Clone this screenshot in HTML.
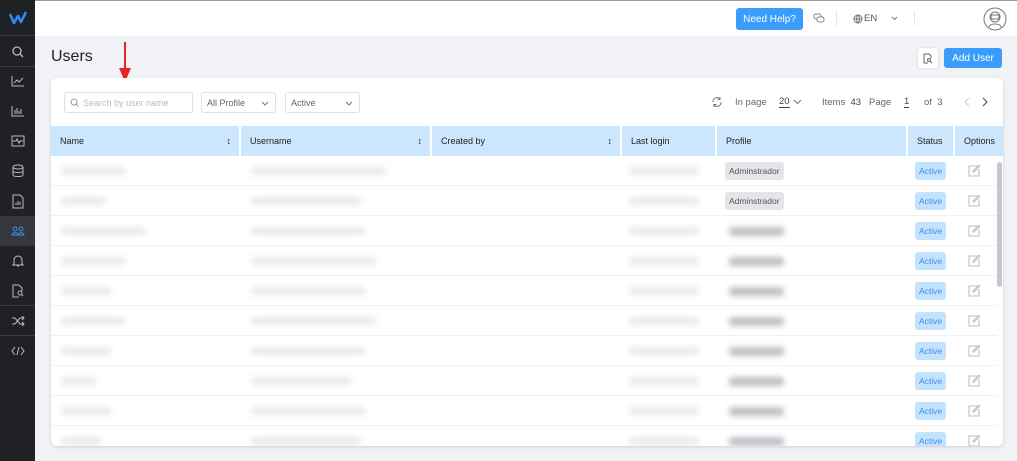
<!DOCTYPE html>
<html><head><style>
*{box-sizing:border-box;margin:0;padding:0}
body{width:1017px;height:461px;overflow:hidden;background:#f0f2f6;font-family:"Liberation Sans",sans-serif;position:relative;font-size:10px;color:#333}
.side{position:absolute;left:0;top:0;width:35px;height:461px;background:#1f2125}
.side .logo{height:36px;border-bottom:1px solid #3a3c40;display:flex;align-items:center;justify-content:center}
.ic{position:absolute;left:0;width:35px;height:30px;display:flex;align-items:center;justify-content:center}
.top{position:absolute;left:35px;top:0;right:0;height:36px;background:#fff;border-top:1px solid #999}
.btn{position:absolute;background:#3b9dfa;color:#fff;border-radius:3px;font-size:10px;display:flex;align-items:center;justify-content:center}
.card{position:absolute;left:51px;top:78px;width:952px;height:368px;background:#fff;border-radius:6px;box-shadow:0 1px 3px rgba(0,0,0,.15);overflow:hidden}
.inp{position:absolute;top:14px;height:21px;border:1px solid #dde0e5;border-radius:3px;font-size:9px;color:#777;display:flex;align-items:center;padding-left:5px}
.hdr{position:absolute;top:48px;left:0;width:952px;height:30px;background:#cbe6fd}
.hc{position:absolute;top:0;height:30px;border-right:2px solid #fff;font-size:9px;color:#222;display:flex;align-items:center;padding-left:9px}
.row{position:absolute;left:0;width:946px;height:30px;border-bottom:1px solid #f1f2f4}
.bl{position:absolute;top:11px;height:8px;background:#d6d9dc;filter:blur(3px);border-radius:3px;opacity:.55}
.tag{position:absolute;top:6px;height:18px;border-radius:3px;font-size:8.5px;display:flex;align-items:center;padding:0 4px}
</style></head><body>
<div class="side">
 <div class="logo"><svg width="18" height="14" viewBox="0 0 18 14"><path d="M1 3 L5 12 L9 5 L12 11 L17 1" stroke="#2f8cf0" stroke-width="2.6" fill="none" stroke-linejoin="round"/></svg></div>
 <div class="ic" style="top:37px"><svg width="12" height="12"><circle cx="5" cy="5" r="4" stroke="#bbb" fill="none" stroke-width="1.3"/><path d="M8 8l3 3" stroke="#bbb" stroke-width="1.3"/></svg></div>
 <div style="position:absolute;top:66px;left:0;width:35px;border-top:1px solid #3a3c40"></div>
 <div class="ic" style="top:66px"><svg width="14" height="12"><path d="M1 1v10h12M3 8l3-3 2 2 4-4" stroke="#bbb" fill="none"/></svg></div>
 <div class="ic" style="top:96px"><svg width="14" height="12"><path d="M1 1v10h12M4 9V5M6 9V3M8 9V6M10 9V4" stroke="#bbb" fill="none"/></svg></div>
 <div class="ic" style="top:126px"><svg width="14" height="12"><rect x="1" y="1" width="12" height="10" stroke="#bbb" fill="none"/><path d="M2 6h3l1-2 2 4 1-2h3" stroke="#bbb" fill="none"/></svg></div>
 <div class="ic" style="top:156px"><svg width="12" height="14"><ellipse cx="6" cy="3" rx="5" ry="2" stroke="#bbb" fill="none"/><path d="M1 3v8c0 2 10 2 10 0V3M1 7c0 2 10 2 10 0" stroke="#bbb" fill="none"/></svg></div>
 <div class="ic" style="top:186px"><svg width="12" height="15"><path d="M1 1h7l3 3v10H1z" stroke="#bbb" fill="none"/><path d="M4 11V9M6 11V7M8 11V8" stroke="#bbb"/></svg></div>
 <div class="ic" style="top:216px;background:#35373c"><svg width="14" height="10"><circle cx="4" cy="3" r="2" stroke="#3b8ef0" fill="none"/><circle cx="10" cy="3" r="2" stroke="#3b8ef0" fill="none"/><path d="M1 9c0-3 6-3 6 0zM7 9c0-3 6-3 6 0z" stroke="#3b8ef0" fill="none"/></svg></div>
 <div class="ic" style="top:246px"><svg width="12" height="14"><path d="M2 10V6a4 4 0 018 0v4l1 1H1zM5 12h2" stroke="#bbb" fill="none"/></svg></div>
 <div class="ic" style="top:276px"><svg width="12" height="14"><path d="M7 13H1V1h6l3 3v3" stroke="#bbb" fill="none"/><circle cx="8" cy="9" r="2" stroke="#bbb" fill="none"/><path d="M9.5 10.5L11 12" stroke="#bbb"/></svg></div>
 <div style="position:absolute;top:305px;left:0;width:35px;border-top:1px solid #3a3c40"></div>
 <div class="ic" style="top:306px"><svg width="14" height="10"><path d="M1 2h3l5 6h4M1 8h3l5-6h4M11 0l2 2-2 2M11 6l2 2-2 2" stroke="#bbb" fill="none"/></svg></div>
 <div style="position:absolute;top:335px;left:0;width:35px;border-top:1px solid #3a3c40"></div>
 <div class="ic" style="top:336px"><svg width="14" height="10"><path d="M4 1L1 5l3 4M10 1l3 4-3 4M8 1L6 9" stroke="#bbb" fill="none"/></svg></div>
</div>
<div class="top">
 <div class="btn" style="left:701px;top:7px;width:67px;height:22px">Need Help?</div>
 <svg style="position:absolute;left:778px;top:12px" width="12" height="11"><rect x="1" y="1" width="7" height="5" rx="2" stroke="#888" fill="none"/><rect x="4" y="4" width="7" height="5" rx="2" stroke="#888" fill="#fff"/></svg>
 <div style="position:absolute;left:801px;top:10px;height:15px;border-left:1px solid #e3e5e8"></div>
 <svg style="position:absolute;left:818px;top:13px" width="10" height="10"><circle cx="5" cy="5" r="4" stroke="#777" fill="none"/><path d="M1 5h8M5 1c-2 2-2 6 0 8M5 1c2 2 2 6 0 8" stroke="#777" fill="none"/></svg>
 <div style="position:absolute;left:829px;top:12px;font-size:9.5px;color:#555">EN</div>
 <svg style="position:absolute;left:856px;top:15px" width="7" height="5"><path d="M1 1l2.5 2.5L6 1" stroke="#777" fill="none"/></svg>
 <div style="position:absolute;left:879px;top:10px;height:15px;border-left:1px solid #e3e5e8"></div>
 <svg style="position:absolute;left:948px;top:6px" width="24" height="24"><circle cx="12" cy="12" r="11" stroke="#777" fill="none"/><circle cx="12" cy="10" r="5" stroke="#777" fill="none"/><rect x="8" y="8" width="8" height="4" rx="1.5" stroke="#777" fill="none"/><path d="M6 20c1-4 11-4 12 0" stroke="#777" fill="none"/></svg>
</div>
<div style="position:absolute;left:51px;top:48px;font-size:16px;color:#222">Users</div>
<svg style="position:absolute;left:118px;top:42px" width="14" height="42"><path d="M7 0v28" stroke="#e52320" stroke-width="2"/><path d="M1 26h12l-6 14z" fill="#e52320"/></svg>
<div style="position:absolute;left:918px;top:48px;width:20px;height:20px;background:#fff;border-radius:3px;box-shadow:0 0 2px rgba(0,0,0,.15)"><svg style="margin:5px" width="10" height="11"><path d="M5 10H1V1h5l2 2v2" stroke="#666" fill="none"/><circle cx="6" cy="7" r="1.5" stroke="#666" fill="none"/><path d="M7 8l2 2" stroke="#666"/></svg></div>
<div class="btn" style="left:944px;top:48px;width:58px;height:20px">Add User</div>
<div class="card">
 <div class="inp" style="left:13px;width:129px"><svg width="9" height="9"><circle cx="4" cy="4" r="3" stroke="#999" fill="none"/><path d="M6 6l2.5 2.5" stroke="#999"/></svg><span style="margin-left:4px;color:#bbb">Search by user name</span></div>
 <div class="inp" style="left:150px;width:75px;color:#666">All Profile<svg style="position:absolute;right:6px;top:8px" width="8" height="5"><path d="M1 1l3 3 3-3" stroke="#777" fill="none"/></svg></div>
 <div class="inp" style="left:234px;width:75px;color:#666">Active<svg style="position:absolute;right:6px;top:8px" width="8" height="5"><path d="M1 1l3 3 3-3" stroke="#777" fill="none"/></svg></div>
 <svg style="position:absolute;left:661px;top:19px" width="10" height="10"><path d="M1 5a4 4 0 017-3M9 5a4 4 0 01-7 3M8 0v2.5H5.5M2 10V7.5h2.5" stroke="#777" fill="none"/></svg>
 <div style="position:absolute;left:684px;top:19px;font-size:9.5px;color:#666">In page</div>
 <div style="position:absolute;left:728px;top:18px;font-size:9.5px;color:#444;border-bottom:1px solid #444">20</div>
 <svg style="position:absolute;left:742px;top:21px" width="9" height="6"><path d="M1 1l3.5 3.5L8 1" stroke="#777" fill="none"/></svg>
 <div style="position:absolute;left:771px;top:19px;font-size:9.5px;color:#666">Items&nbsp; <span style="color:#444">43</span>&nbsp;&nbsp; Page</div>
 <div style="position:absolute;left:853px;top:18px;font-size:9.5px;color:#444;border-bottom:1px solid #444">1</div>
 <div style="position:absolute;left:873px;top:19px;font-size:9.5px;color:#666">of&nbsp; 3</div>
 <svg style="position:absolute;left:913px;top:19px" width="6" height="10"><path d="M5 1L1 5l4 4" stroke="#ccc" fill="none"/></svg>
 <svg style="position:absolute;left:931px;top:19px" width="6" height="10"><path d="M1 1l4 4-4 4" stroke="#444" fill="none"/></svg>
 <div class="hdr">
  <div class="hc" style="left:0;width:190px">Name<span style="position:absolute;right:8px">↕</span></div>
  <div class="hc" style="left:190px;width:191px">Username<span style="position:absolute;right:8px">↕</span></div>
  <div class="hc" style="left:381px;width:190px">Created by<span style="position:absolute;right:8px">↕</span></div>
  <div class="hc" style="left:571px;width:95px">Last login</div>
  <div class="hc" style="left:666px;width:191px">Profile</div>
  <div class="hc" style="left:857px;width:47px">Status</div>
  <div class="hc" style="left:904px;width:48px;border:0">Options</div>
 </div>
 <div id="rows"></div>
 <div style="position:absolute;left:946px;top:84px;width:5px;height:125px;background:#c4c8cd;border-radius:3px"></div>
</div>
<script>
var h='',nw=[65,45,85,65,50,65,50,35,50,40],uw=[135,110,115,125,115,125,115,100,115,110];
for(var i=0;i<10;i++){var t=78+i*30;
h+='<div class="row" style="top:'+t+'px">'+
'<div class="bl" style="left:10px;width:'+nw[i]+'px"></div>'+
'<div class="bl" style="left:200px;width:'+uw[i]+'px"></div>'+
'<div class="bl" style="left:578px;width:70px"></div>'+
(i<2?'<div class="tag" style="left:674px;background:#e3e5e8;color:#555">Adminstrador</div>':'<div class="bl" style="left:678px;width:55px;background:#a8acb2;height:9px;opacity:.75"></div>')+
'<div class="tag" style="left:864px;background:#c3e2fd;color:#3b8ef0">Active</div>'+
'<svg style="position:absolute;left:917px;top:9px" width="12" height="12"><path d="M9 1H1v10h10V4" stroke="#bbb" fill="none"/><path d="M5 7l1 0 6-6-1-1-6 6z" stroke="#bbb" fill="none"/></svg></div>';}
document.getElementById('rows').innerHTML=h;
</script>
</body></html>
